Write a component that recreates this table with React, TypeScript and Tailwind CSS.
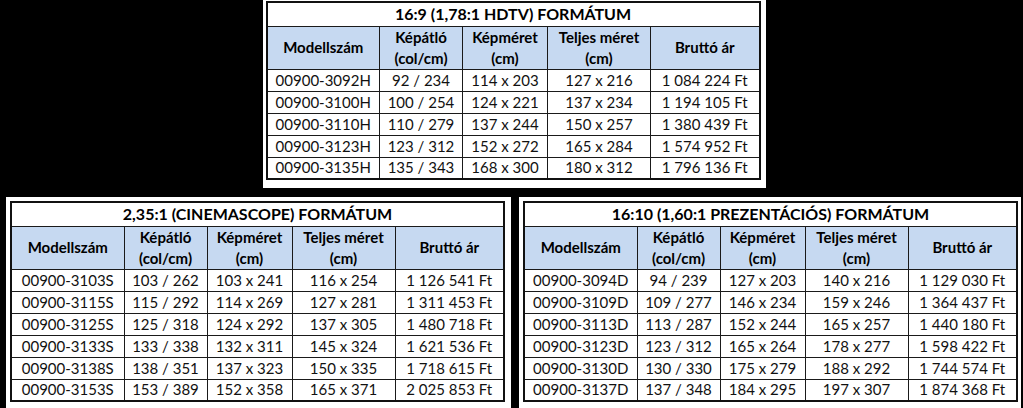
import React from "react";

type Row = [string, string, string, string, string];

const hdtv: Row[] = [
  ["00900-3092H", "92 / 234", "114 x 203", "127 x 216", "1 084 224 Ft"],
  ["00900-3100H", "100 / 254", "124 x 221", "137 x 234", "1 194 105 Ft"],
  ["00900-3110H", "110 / 279", "137 x 244", "150 x 257", "1 380 439 Ft"],
  ["00900-3123H", "123 / 312", "152 x 272", "165 x 284", "1 574 952 Ft"],
  ["00900-3135H", "135 / 343", "168 x 300", "180 x 312", "1 796 136 Ft"],
];

const cinema: Row[] = [
  ["00900-3103S", "103 / 262", "103 x 241", "116 x 254", "1 126 541 Ft"],
  ["00900-3115S", "115 / 292", "114 x 269", "127 x 281", "1 311 453 Ft"],
  ["00900-3125S", "125 / 318", "124 x 292", "137 x 305", "1 480 718 Ft"],
  ["00900-3133S", "133 / 338", "132 x 311", "145 x 324", "1 621 536 Ft"],
  ["00900-3138S", "138 / 351", "137 x 323", "150 x 335", "1 718 615 Ft"],
  ["00900-3153S", "153 / 389", "152 x 358", "165 x 371", "2 025 853 Ft"],
];

const prezi: Row[] = [
  ["00900-3094D", "94 / 239", "127 x 203", "140 x 216", "1 129 030 Ft"],
  ["00900-3109D", "109 / 277", "146 x 234", "159 x 246", "1 364 437 Ft"],
  ["00900-3113D", "113 / 287", "152 x 244", "165 x 257", "1 440 180 Ft"],
  ["00900-3123D", "123 / 312", "165 x 264", "178 x 277", "1 598 422 Ft"],
  ["00900-3130D", "130 / 330", "175 x 279", "188 x 292", "1 744 574 Ft"],
  ["00900-3137D", "137 / 348", "184 x 295", "197 x 307", "1 874 368 Ft"],
];

function PriceTable({ title, rows }: { title: string; rows: Row[] }) {
  const cell = "border border-[#1a1a1a] p-0 text-center";
  return (
    <table className="table-fixed border-collapse border-2 border-[#111] bg-white text-black">
      <colgroup>
        <col className="w-[113px]" />
        <col className="w-[83px]" />
        <col className="w-[85px]" />
        <col className="w-[103px]" />
        <col className="w-[109px]" />
      </colgroup>
      <thead>
        <tr className="h-[24px]">
          <th colSpan={5} className={`${cell} text-[16px] font-bold leading-none`}>
            {title}
          </th>
        </tr>
        <tr className="h-[43px] bg-[#c6d9f1] text-[15px] font-bold leading-[21px]">
          <th className={cell}>Modellszám</th>
          <th className={cell}>
            Képátló
            <br />
            (col/cm)
          </th>
          <th className={cell}>
            Képméret
            <br />
            (cm)
          </th>
          <th className={cell}>
            Teljes méret
            <br />
            (cm)
          </th>
          <th className={cell}>Bruttó ár</th>
        </tr>
      </thead>
      <tbody className="text-[15px] leading-none text-[#111]">
        {rows.map((r) => (
          <tr key={r[0]} className="h-[22px]">
            {r.map((v, i) => (
              <td key={i} className={cell}>
                {v}
              </td>
            ))}
          </tr>
        ))}
      </tbody>
    </table>
  );
}

export default function App() {
  return (
    <div
      className="h-[408px] w-[1023px] overflow-hidden bg-black"
      style={{ fontFamily: "Lato, 'Open Sans', sans-serif" }}
    >
      <div className="flex justify-center pl-[5px]">
        <div className="bg-white pb-[8px] pl-[3px] pr-[5px] pt-px">
          <PriceTable title="16:9 (1,78:1 HDTV) FORMÁTUM" rows={hdtv} />
        </div>
      </div>
      <div className="mt-[9px] flex gap-[8px] pl-[6px]">
        <div className="h-[220px] bg-white pl-[4px] pr-[6px] pt-[4px]">
          <PriceTable title="2,35:1 (CINEMASCOPE) FORMÁTUM" rows={cinema} />
        </div>
        <div className="h-[220px] bg-white pl-[4px] pr-[3px] pt-[4px]">
          <PriceTable title="16:10 (1,60:1 PREZENTÁCIÓS) FORMÁTUM" rows={prezi} />
        </div>
      </div>
    </div>
  );
}
